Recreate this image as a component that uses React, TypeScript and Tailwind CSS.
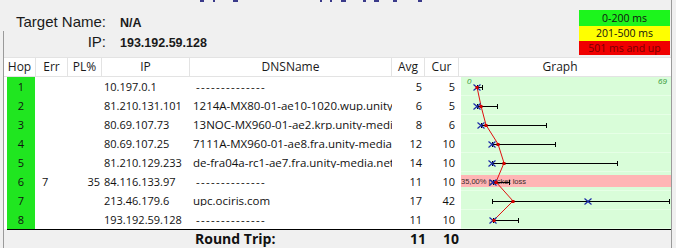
import React from "react";

type Row = { hop: number; err?: string; pl?: string; ip: string; dns: string; avg: number; cur: number };

const rows: Row[] = [
  { hop: 1, ip: "10.197.0.1", dns: "--------------", avg: 5, cur: 5 },
  { hop: 2, ip: "81.210.131.101", dns: "1214A-MX80-01-ae10-1020.wup.unity-media.net", avg: 6, cur: 5 },
  { hop: 3, ip: "80.69.107.73", dns: "13NOC-MX960-01-ae2.krp.unity-media.net", avg: 8, cur: 6 },
  { hop: 4, ip: "80.69.107.25", dns: "7111A-MX960-01-ae8.fra.unity-media.net", avg: 12, cur: 10 },
  { hop: 5, ip: "81.210.129.233", dns: "de-fra04a-rc1-ae7.fra.unity-media.net", avg: 14, cur: 10 },
  { hop: 6, err: "7", pl: "35", ip: "84.116.133.97", dns: "--------------", avg: 11, cur: 10 },
  { hop: 7, ip: "213.46.179.6", dns: "upc.ociris.com", avg: 17, cur: 42 },
  { hop: 8, ip: "193.192.59.128", dns: "--------------", avg: 11, cur: 10 },
];

const pts = [
  { x: 18, r: 18, min: 18, max: 24 },
  { x: 18, r: 22, min: 18, max: 39 },
  { x: 22, r: 27, min: 22, max: 88 },
  { x: 33, r: 39, min: 33, max: 97 },
  { x: 33, r: 45, min: 33, max: 159 },
  { x: 34, r: 37, min: 34, max: 51 },
  { x: 129, r: 54, min: 33, max: 211 },
  { x: 34, r: 35, min: 34, max: 60 },
];

const marks = [
  [200, 4], [213, 2], [233, 5], [320, 2], [330, 2], [341, 5], [363, 3], [374, 5], [393, 4], [418, 4],
];

function Graph() {
  const cy = (i: number) => 10 + 19 * i;
  const poly = pts.map((p, i) => `${p.r},${cy(i)}`).join(" ");
  return (
    <svg width={212} height={152} viewBox="0 0 212 152" className="block">
      <rect x={2} y={0} width={210} height={152} fill="#d9fdd9" />
      {pts.map((_, i) => (
        <line key={"g" + i} x1={2} x2={212} y1={19 * (i + 1) - 0.5} y2={19 * (i + 1) - 0.5} stroke="#e6ffe6" strokeWidth={1} />
      ))}
      <rect x={2} y={98} width={210} height={12} fill="#ffb5b5" />
      <text x={8} y={7} fontSize={8} fill="#3a9a3a" fontStyle="italic" fontFamily="'Liberation Sans', sans-serif">0</text>
      <text x={208} y={7} fontSize={8} fill="#3a9a3a" fontStyle="italic" textAnchor="end" fontFamily="'Liberation Sans', sans-serif">69</text>
      <text x={2} y={107} fontSize={7.5} fill="#3a2a2a" fontFamily="'Liberation Sans', sans-serif">35,00% packet loss</text>
      {pts.map((p, i) => {
        const y = cy(i) + 0.5;
        return (
          <g key={i}>
            <line x1={p.min} x2={p.max} y1={y} y2={y} stroke="#000" strokeWidth={1} />
            <line x1={p.min + 0.5} x2={p.min + 0.5} y1={y - 2.5} y2={y + 2.5} stroke="#000" strokeWidth={1} />
            <line x1={p.max - 0.5} x2={p.max - 0.5} y1={y - 2.5} y2={y + 2.5} stroke="#000" strokeWidth={1} />
          </g>
        );
      })}
      <polyline points={poly} fill="none" stroke="#e01010" strokeWidth={1} />
      {pts.map((p, i) => {
        const y = cy(i) + 0.5;
        return (
          <g key={"x" + i}>
            <line x1={p.x - 3.5} x2={p.x + 3.5} y1={y - 3} y2={y + 3} stroke="#1c2aa8" strokeWidth={1.2} />
            <line x1={p.x - 3.5} x2={p.x + 3.5} y1={y + 3} y2={y - 3} stroke="#1c2aa8" strokeWidth={1.2} />
            <rect x={p.r - 1.5} y={y - 1.5} width={3} height={3} fill="#d40000" />
          </g>
        );
      })}
    </svg>
  );
}

export default function App() {
  return (
    <div className="w-[676px] h-[248px] bg-[#f0f0f0] overflow-hidden font-['Open_Sans',sans-serif] text-[#111]">
      <div className="w-[672px] h-full border-r border-[#9a9a9a] flex flex-col">
        {/* top info */}
        <div className="h-[57px] flex shrink-0">
          <div className="flex-1 flex flex-col">
            <div className="h-[3px] relative">
              {marks.map(([x, w], i) => (
                <span key={i} className="absolute top-0 h-[2px] bg-[#3a3a8a]" style={{ left: x, width: w }} />
              ))}
            </div>
            <div className="h-[28px] pt-[10px] flex items-baseline">
              <span className="w-[106px] text-right text-[15px] leading-[18px] font-['Liberation_Sans',sans-serif] text-[#1a1a1a]">Target Name:</span>
              <span className="ml-[14px] text-[12.5px] font-bold font-['Liberation_Sans',sans-serif] text-[#1a1a1a]">N/A</span>
            </div>
            <div className="h-[26px] ml-[3px] border-l border-[#9a9a9a] pt-[2px] flex items-baseline">
              <span className="w-[102px] text-right text-[15px] leading-[18px] font-['Liberation_Sans',sans-serif] text-[#1a1a1a]">IP:</span>
              <span className="ml-[14px] text-[12.5px] font-bold font-['Liberation_Sans',sans-serif] text-[#1a1a1a]">193.192.59.128</span>
            </div>
          </div>
          <div className="w-[91px] mr-[1px] pt-[10px] flex flex-col text-[10.5px] leading-none">
            <div className="h-[16px] bg-[#1cf51c] text-[#111] flex items-center justify-center">0-200 ms</div>
            <div className="h-[15px] bg-[#ffff00] text-[#111] flex items-center justify-center">201-500 ms</div>
            <div className="h-[14px] bg-[#f00000] text-[#7a0000] flex items-center justify-center whitespace-nowrap">501 ms and up</div>
          </div>
        </div>

        {/* table */}
        <div className="flex-1 ml-[3px] border-l border-[#9a9a9a] flex flex-col">
          <div className="h-[20px] bg-white border-t border-b border-[#e3e3e3] flex text-[12px] leading-none text-[#1a1a1a]">
            <div className="w-[32px] border-r border-[#e3e3e3] flex items-center justify-center">Hop</div>
            <div className="w-[32px] border-r border-[#e3e3e3] flex items-center justify-center">Err</div>
            <div className="w-[34px] border-r border-[#e3e3e3] flex items-center justify-center">PL%</div>
            <div className="w-[88px] border-r border-[#e3e3e3] flex items-center justify-center">IP</div>
            <div className="w-[202px] border-r border-[#e3e3e3] flex items-center justify-center">DNSName</div>
            <div className="w-[33px] border-r border-[#e3e3e3] flex items-center justify-center">Avg</div>
            <div className="w-[34px] border-r border-[#e3e3e3] flex items-center justify-center">Cur</div>
            <div className="flex-1 flex items-center justify-center pr-[10px]">Graph</div>
          </div>
          <div className="flex bg-white">
            <div className="w-[455px] flex flex-col text-[11px] leading-none">
              {rows.map((r) => (
                <div key={r.hop} className="h-[19px] flex items-center">
                  <div className="w-[32px] h-full pl-[3px]">
                    <div className="w-[28px] h-full bg-[#20e620] flex items-center justify-center">{r.hop}</div>
                  </div>
                  <div className="w-[32px] pl-[6px]">{r.err ?? ""}</div>
                  <div className="w-[34px] pr-[2px] text-right">{r.pl ?? ""}</div>
                  <div className="w-[88px] pl-[2px] whitespace-nowrap">{r.ip}</div>
                  <div className={"w-[202px] whitespace-nowrap overflow-hidden text-[11.5px] " + (r.dns.startsWith("-") ? "pl-[6px] tracking-[1.3px]" : "pl-[3px]")}>{r.dns}</div>
                  <div className="w-[33px] pr-[3px] text-right">{r.avg}</div>
                  <div className="w-[34px] pr-[4px] text-right">{r.cur}</div>
                </div>
              ))}
            </div>
            <Graph />
          </div>
          <div className="ml-[3px] border-t border-black flex-1 flex items-center text-[14px] font-bold leading-none">
            <div className="w-[186px]" />
            <div className="w-[202px] pl-[2px]">Round Trip:</div>
            <div className="w-[33px] pr-[2px] text-right">11</div>
            <div className="w-[34px] pr-[3px] text-right">10</div>
          </div>
        </div>
      </div>
    </div>
  );
}
